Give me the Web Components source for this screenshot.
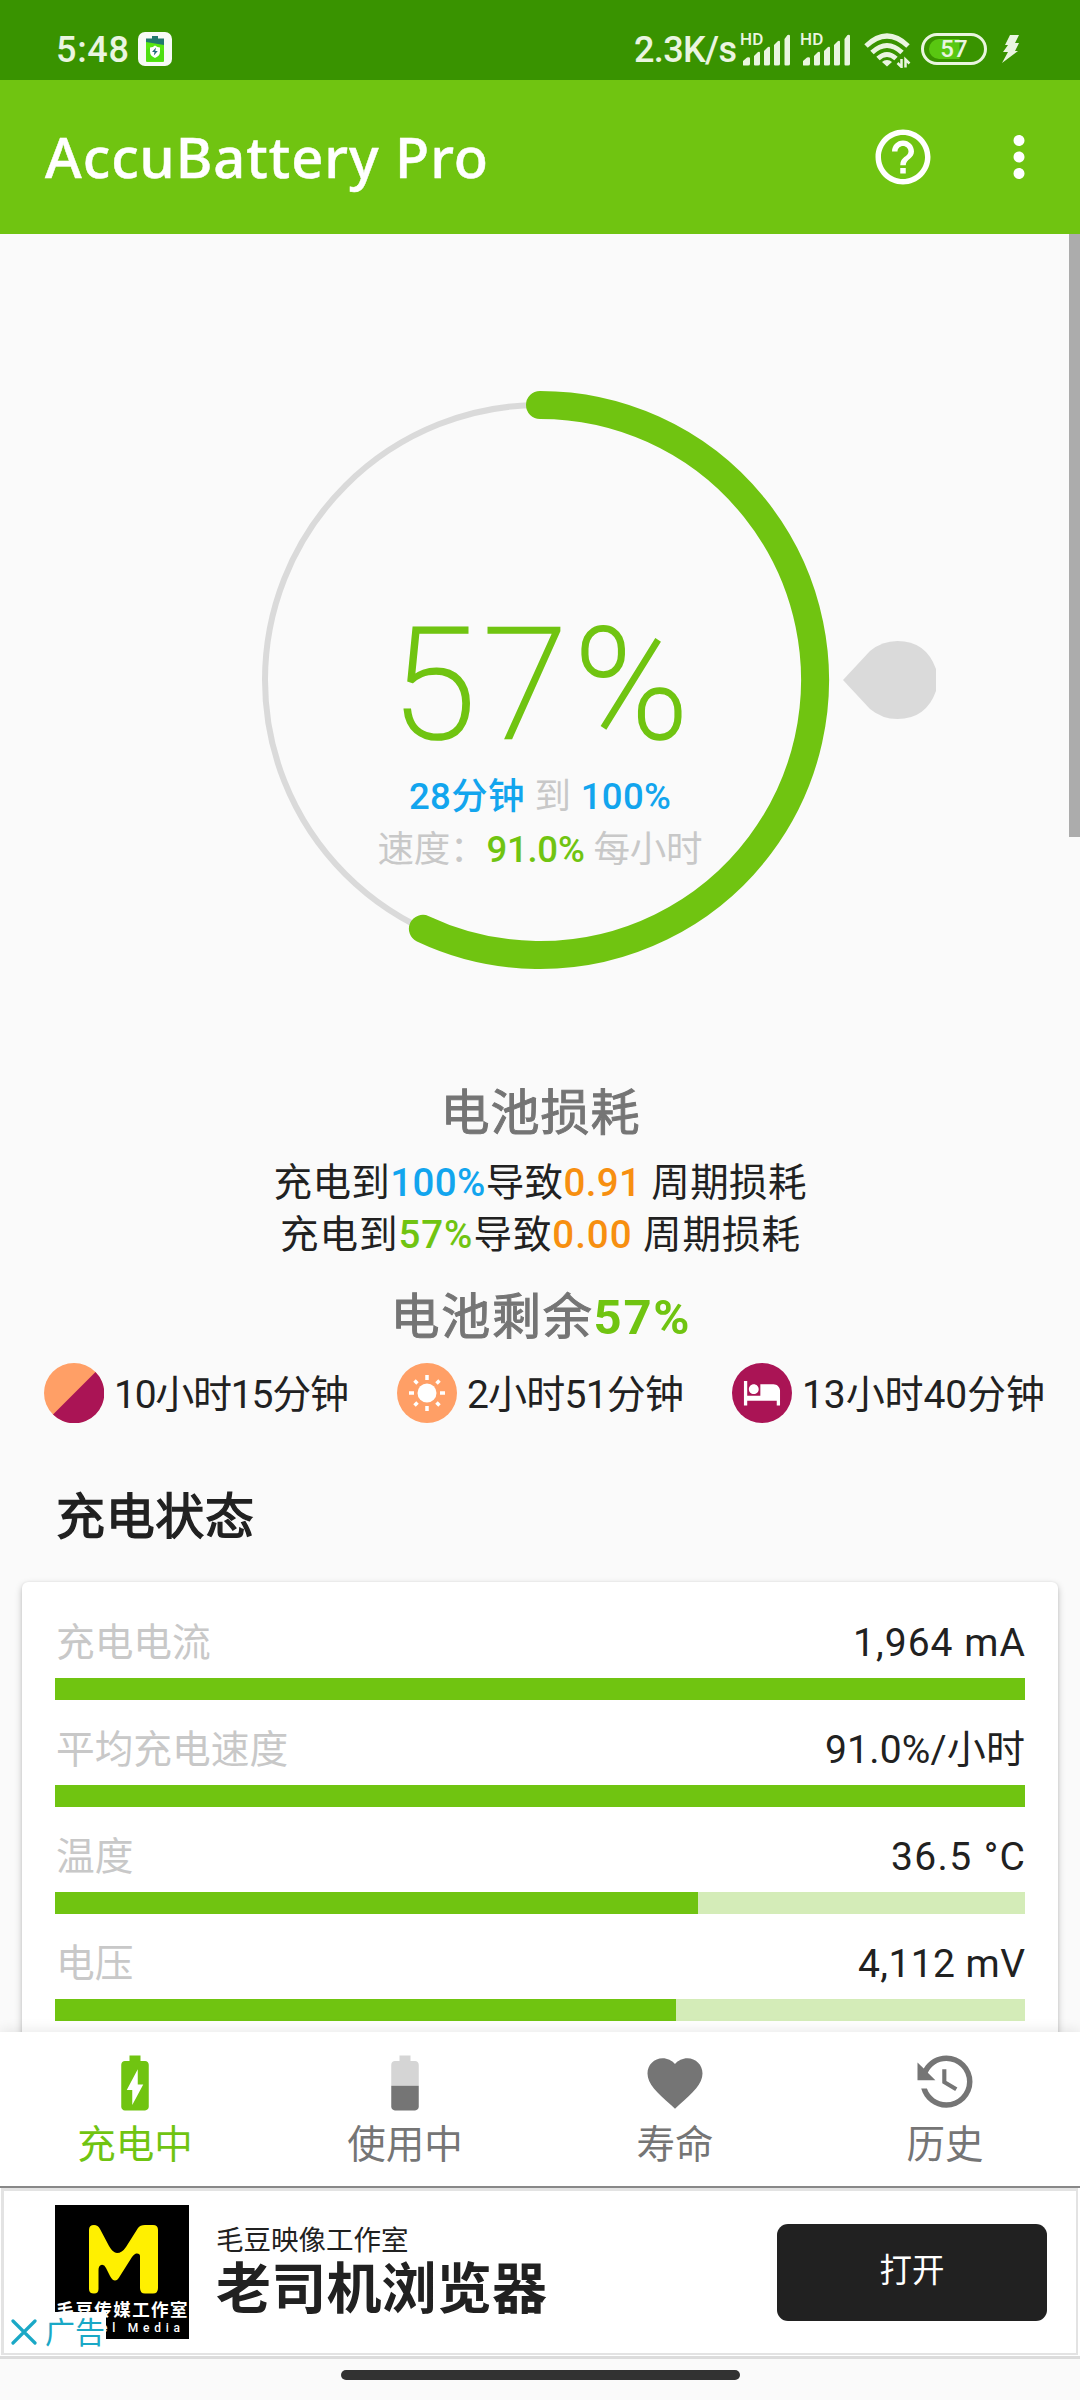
<!DOCTYPE html>
<html lang="zh-CN">
<head>
<meta charset="utf-8">
<title>AccuBattery Pro</title>
<style>
html,body{margin:0;padding:0}
body{width:1080px;height:2400px;overflow:hidden;background:#fafafa;color:#212121;font-family:Roboto,"Noto Sans CJK SC",sans-serif}
b{font-weight:500}
</style>
</head>
<body>
<battery-app></battery-app>
<script>
const define=(name,html,setup)=>customElements.define(name,class extends HTMLElement{
  constructor(){super();this.attachShadow({mode:'open'}).innerHTML=typeof html==='function'?'':html;}
  connectedCallback(){if(typeof html==='function')this.shadowRoot.innerHTML=html(this);if(setup)setup(this);}
});
const shared=`<style>b{font-weight:500}.blue{color:#12a5ee}.green{color:#70c411}.orange{color:#f78f10}.gray{color:#c8c8c8}</style>`;

/* One line of text, tracked so that it spans the given width. */
define('fit-line',el=>`<style>:host{display:block;width:max-content;white-space:pre;font-size:${el.getAttribute('size')}px;line-height:${el.getAttribute('line')}px}</style><slot></slot>`,el=>{
  const w=+el.getAttribute('w');if(!w)return;
  const n=[...el.textContent].length;
  const s=(w-el.getBoundingClientRect().width)/(n-1);
  el.style.letterSpacing=s+'px';el.style.marginRight=-s+'px';
});

define('signal-bars',`<style>:host{display:grid;width:49px;height:33px;margin-right:11px}
span,svg{grid-area:1/1}span{font:500 17px/14px Roboto,sans-serif;letter-spacing:.2px;margin:-1px 0 0 -1px}svg{display:block}</style>
<span>HD</span><svg width="49" height="33" fill="currentColor"><path d="M2 32v-4l4-3.500q3-1 3 1V31q0 1.500-2 1.500H3q-1 0-1-.5zM13 23l4-4q2-1 2 1v11q0 1.500-2 1.500h-3q-1 0-1-1zM23 18l4-4q2-1 2 1v16q0 1.500-2 1.500h-3q-1 0-1-1zM33 12l4-4q2-1 2 1v22q0 1.500-2 1.500h-3q-1 0-1-1zM43.500 6l3-4q2.500-1 2.500 1v28q0 1.500-2 1.500h-2.500q-1 0-1-1z"/></svg>`);

define('status-bar',shared+`<style>
:host{display:flex;height:80px;background:#399300;color:#eaf5e0;box-sizing:border-box;padding:0 61px 0 56px;align-items:flex-start;font-weight:500}
.time{margin-top:27px}.app{margin:32px 0 0 9px}.space{flex:1}.speed{margin-top:27px}
signal-bars{margin-top:33px}.first{margin-left:4px}.wifi{margin:32px 0 0 3px}
.pill{display:grid;place-items:center;width:60px;height:26px;border:3px solid;border-radius:17px;margin:33px 0 0 10px}
.pill svg,.pill span{grid-area:1/1}.pill span{font-size:24px;line-height:26px}
.bolt{margin:35px 0 0 15px}svg{display:block}
</style>
<fit-line class="time" size="36" line="46" w="73">5:48</fit-line>
<svg class="app" width="34" height="34"><rect width="34" height="34" rx="7" fill="#f7faf7"/><path d="M8 6.500h6V4h6v2.500h6V13H8z" fill="#21796d"/><path d="M8 10l9 1.500L26 13v16q0 1-1 1H9q-1 0-1-1z" fill="#57e610"/><path d="M8 18l7-4 11 5v10H8z" fill="#4dde12"/><path d="M17 13.500q2.500 2 5 2v4Q22 24 17 26q-5-2-5-6.500v-4q3 0 5-2z" fill="#fff"/><path d="M18 15.500l-4 4.500h2.500l-.7 3.500 4-4.500h-2.500z" fill="#206b78"/></svg>
<div class="space"></div>
<fit-line class="speed" size="36" line="46" w="103">2.3K/s</fit-line>
<signal-bars class="first"></signal-bars><signal-bars></signal-bars>
<svg class="wifi" width="47" height="36" fill="none" stroke="currentColor" stroke-width="5"><path d="M2 14q21-20 42 0M8 20.500q15-14 30 0M14 26.500q9-8 18 0"/><path d="M23 28q3 0 5 2l-5 4.500-5-4.500q2-2 5-2z" fill="currentColor" stroke="none"/><path d="M37.500 27v8l-4-4M41.500 35.500v-8l4 4" stroke-width="2.500"/></svg>
<div class="pill"><svg width="60" height="26"><path d="M35.500 3H15a10 10 0 0 0 0 20h20.500z" fill="#59c711"/></svg><span>57</span></div>
<svg class="bolt" width="17" height="28" fill="currentColor"><path d="M8 0h9l-4 8h4l-4 8h3L0 28l6-11H1l5-7H3z"/></svg>`);

define('app-bar',`<style>:host{display:flex;align-items:center;height:154px;box-sizing:border-box;background:#70c411;color:#fff;padding:0 28px 0 45px}
fit-line{font-family:"Noto Sans",sans-serif;font-weight:500;-webkit-text-stroke:.5px #fff;flex:none;padding-bottom:2px}.gap{flex:1}svg{display:block;fill:currentColor;flex:none}.more{margin-left:50px}</style>
<fit-line size="56" line="76" w="443">AccuBattery Pro</fit-line><div class="gap"></div>
<svg width="66" height="66" viewBox="0 0 24 24"><path d="M11 18h2v-2h-2v2zm1-16C6.480 2 2 6.480 2 12s4.480 10 10 10 10-4.480 10-10S17.520 2 12 2zm0 18c-4.410 0-8-3.590-8-8s3.590-8 8-8 8 3.590 8 8-3.590 8-8 8zm0-14c-2.210 0-4 1.790-4 4h2c0-1.100.9-2 2-2s2 .9 2 2c0 2-3 1.750-3 5h2c0-2.250 3-2.500 3-5 0-2.210-1.790-4-4-4z"/></svg>
<svg class="more" width="66" height="66" viewBox="0 0 24 24"><path d="M12 8c1.100 0 2-.9 2-2s-.9-2-2-2-2 .9-2 2 .9 2 2 2zm0 2c-1.100 0-2 .9-2 2s.9 2 2 2 2-.9 2-2-.9-2-2-2zm0 6c-1.100 0-2 .9-2 2s.9 2 2 2 2-.9 2-2-.9-2-2-2z"/></svg>`);

define('charge-ring',shared+`<style>:host{display:grid;height:849px;justify-items:center;align-items:start}
svg,.text{grid-area:1/1}.text{display:flex;flex-direction:column;align-items:center;padding-top:374px}
.big{font-weight:200;color:#70c411;-webkit-text-stroke:1.600px #70c411;margin-bottom:7px}</style>
<svg width="1080" height="800" fill="none"><circle cx="540" cy="446" r="275" stroke="#dadada" stroke-width="6"/>
<path d="M540 171A275 275 0 1 1 422.900 694.800" stroke="#70c411" stroke-width="28" stroke-linecap="round"/>
<path d="M843 446L870 417Q882 407 897.500 407Q926 407 936 435V457Q926 485 897.500 485Q882 485 870 475Z" fill="#dadada"/></svg>
<div class="text"><fit-line class="big" size="155" line="155" w="298">57%</fit-line>
<fit-line size="36.500" line="53" w="262"><b class="blue">28分钟</b><span class="gray"> 到 </span><b class="blue">100%</b></fit-line>
<fit-line size="36.500" line="54" w="325"><span class="gray">速度：</span><b class="green">91.0%</b><span class="gray"> 每小时</span></fit-line></div>`);

define('wear-summary',shared+`<style>:host{display:flex;flex-direction:column;align-items:center}
.h{color:#757575;-webkit-text-stroke:1px #757575}.h b{font-weight:700;-webkit-text-stroke:0}.a{margin-bottom:13px}.z{margin-top:26px}</style>
<fit-line class="h a" size="49" line="61" w="199">电池损耗</fit-line>
<fit-line size="38.500" line="52" w="533">充电到<b class="blue">100%</b>导致<b class="orange">0.91</b> 周期损耗</fit-line>
<fit-line size="38.500" line="52" w="520">充电到<b class="green">57%</b>导致<b class="orange">0.00</b> 周期损耗</fit-line>
<fit-line class="h z" size="49" line="61" w="299">电池剩余<b class="green">57%</b></fit-line>`);

define('time-chip',`<style>:host{display:flex;align-items:center;height:60px;gap:10px}::slotted(svg){display:block;flex:none}::slotted(fit-line){padding-top:3px}</style><slot></slot>`);

define('time-row',`<style>:host{display:flex;justify-content:space-between;padding:0 35px 0 44px;margin-top:15px}</style>
<time-chip><svg width="60" height="60"><circle cx="30" cy="30" r="30" fill="#ff9f66"/><path d="M51.500 9A30 30 0 1 1 9 51.500Z" fill="#aa1455"/></svg><fit-line size="39" line="52" w="235">10小时15分钟</fit-line></time-chip>
<time-chip><svg width="60" height="60"><circle cx="30" cy="30" r="30" fill="#ff9f66"/><circle cx="30" cy="30" r="9.500" fill="#fff"/><g stroke="#fff" stroke-width="3.500"><path d="M30 12v5M30 43v5M12 30h5M43 30h5M17.500 17.500l3 3M39.500 39.500l3 3M17.500 42.500l3-3M39.500 20.500l3-3"/></g></svg><fit-line size="39" line="52" w="217">2小时51分钟</fit-line></time-chip>
<time-chip><svg width="60" height="60"><circle cx="30" cy="30" r="30" fill="#aa1455"/><path transform="translate(10.300 9.800) scale(1.640)" fill="#fff" d="M7 13c1.660 0 3-1.340 3-3S8.660 7 7 7s-3 1.340-3 3 1.340 3 3 3zm12-6h-8v7H3V5H1v15h2v-3h18v3h2v-9c0-2.210-1.790-4-4-4z"/></svg><fit-line size="39" line="52" w="243">13小时40分钟</fit-line></time-chip>`);

define('meter-row',el=>`<style>:host{display:block;margin-bottom:24px}.t{display:flex;justify-content:space-between;padding-left:1px}.l{color:#c8c8c8}.track{height:22px;margin-top:9px;background:#d4ecb8}.fill{height:22px;background:#70c411;width:${el.getAttribute('fill')}px}</style>
<div class="t"><fit-line class="l" size="38.700" line="52">${el.getAttribute('label')}</fit-line><fit-line size="39" line="52" w="${el.getAttribute('vw')}">${el.getAttribute('value')}</fit-line></div><div class="track"><div class="fill"></div></div>`);

define('status-card',`<style>:host{display:block;margin:34px 22px 0;background:#fff;border-radius:6px;padding:35px 33px 40px;box-shadow:0 3px 7px rgba(0,0,0,.25),0 0 2px rgba(0,0,0,.08)}</style>
<meter-row label="充电电流" value="1,964 mA" vw="172" fill="970"></meter-row>
<meter-row label="平均充电速度" value="91.0%/小时" vw="200" fill="970"></meter-row>
<meter-row label="温度" value="36.5 °C" vw="134" fill="643"></meter-row>
<meter-row label="电压" value="4,112 mV" vw="167" fill="621"></meter-row>`);

define('scroll-content',`<style>:host{display:grid;grid-template-columns:1080px;height:1798px;overflow:hidden}.page,.bar{grid-area:1/1}.page{display:flex;flex-direction:column}
.bar{justify-self:end;width:11px;height:603px;background:#acacac}.title{margin:65px 0 0 56px;-webkit-text-stroke:1.400px #212121}</style>
<div class="page"><charge-ring></charge-ring><wear-summary></wear-summary><time-row></time-row>
<fit-line class="title" size="49" line="60" w="198">充电状态</fit-line><status-card></status-card></div><div class="bar"></div>`);

define('nav-tab',`<style>:host{flex:1;display:flex;flex-direction:column;align-items:center;padding-top:18px;color:#757575}:host([active]){color:#70c411}::slotted(svg){display:block;fill:currentColor}::slotted(fit-line){margin-top:3px}</style><slot></slot>`);

define('bottom-nav',`<style>:host{display:flex;height:154px;background:#fff;border-bottom:2px solid #888;box-shadow:0 -2px 12px rgba(0,0,0,.09);position:relative}</style>
<nav-tab active><svg width="66" height="66" viewBox="0 0 24 24"><path d="M15.670 4H14V2h-4v2H8.330C7.600 4 7 4.600 7 5.330v15.330C7 21.400 7.600 22 8.330 22h7.330c.74 0 1.340-.6 1.340-1.330V5.330C17 4.600 16.400 4 15.670 4zM11 20v-5.500H9L13 7v5.500h2L11 20z"/></svg><fit-line size="38.500" line="52">充电中</fit-line></nav-tab>
<nav-tab><svg width="66" height="66" viewBox="0 0 24 24"><path opacity=".3" d="M17 5.330C17 4.600 16.400 4 15.670 4H14V2h-4v2H8.330C7.600 4 7 4.600 7 5.330V13h10z"/><path d="M7 13v7.670C7 21.400 7.600 22 8.330 22h7.330c.74 0 1.340-.6 1.340-1.330V13z"/></svg><fit-line size="38.500" line="52">使用中</fit-line></nav-tab>
<nav-tab><svg width="66" height="66" viewBox="0 0 24 24"><path d="M12 21.350l-1.450-1.320C5.400 15.360 2 12.280 2 8.500 2 5.420 4.420 3 7.500 3c1.740 0 3.410.81 4.500 2.090C13.090 3.810 14.760 3 16.500 3 19.580 3 22 5.420 22 8.500c0 3.780-3.400 6.860-8.550 11.540z"/></svg><fit-line size="38.500" line="52">寿命</fit-line></nav-tab>
<nav-tab><svg width="66" height="66" viewBox="0 0 24 24"><path d="M11 7v5.110l4.710 2.790.79-1.280-4-2.370V7M12.500 2C8.970 2 5.910 3.920 4.270 6.770L2 4.500V11h6.500L5.750 8.250C6.960 5.730 9.500 4 12.500 4a7.500 7.500 0 0 1 0 15c-3.270 0-6.030-2.090-7.060-5h-2.100c1.100 4.030 4.770 7 9.160 7a9.500 9.500 0 0 0 0-19z"/></svg><fit-line size="38.500" line="52">历史</fit-line></nav-tab>`);

define('ad-banner',`<style>:host{display:block;height:168px;background:#fff;border-bottom:3px solid #dcdcdc;padding:0 2px 0 1px;position:relative}
.frame{height:162px;border:3px solid #e3e3e3;border-bottom-width:2px;border-right-width:2px;display:flex;align-items:flex-start}
.logo{width:134px;height:134px;margin:14px 0 0 51px;background:#000;color:#fff;display:flex;flex-direction:column;align-items:center}
.logo svg{display:block}.logo fit-line{font-weight:700}.logo .en{align-self:flex-start;margin-left:46px;font-weight:500}
.copy{margin:32px 0 0 27px}.name{font-weight:700}
.btn{margin:33px 29px 0 auto;width:270px;height:97px;border-radius:11px;background:#212121;color:#fff;display:flex;justify-content:center;align-items:center}.btn fit-line{margin-bottom:4px}
.mark{position:absolute;left:4px;top:124px;width:102px;height:40px;background:#fff;color:#1aa8c6;display:flex;align-items:center}.mark svg{margin:0 8px 0 7px}.mark fit-line{padding-top:1px}</style>
<div class="frame"><div class="logo"><svg width="134" height="95"><path fill="#fff000" d="M34 25Q34 20 39 20Q43 20 45 24L54 41Q58 48 62 48Q67 48 71 42L83 23Q85 20 90 20H98Q103 20 103 25V83Q103 88.500 98 88.500H90Q85 88.500 85 83V51Q85 48 81 48.500Q79 49 77 52L65 71Q60 80 55 71L51 63Q49 59 46 60Q43.500 61 43.500 65V84Q43.500 88.500 39 88.500Q34 88.500 34 84Z"/></svg>
<fit-line size="17.500" line="20" w="131">毛豆传媒工作室</fit-line><fit-line class="en" size="12" line="16" w="79">el Media</fit-line></div>
<div class="copy"><fit-line size="27.500" line="36">毛豆映像工作室</fit-line><fit-line class="name" size="55" line="60" w="331">老司机浏览器</fit-line></div>
<div class="btn"><fit-line size="32.500" line="44">打开</fit-line></div></div>
<div class="mark"><svg width="26" height="26" stroke="currentColor" stroke-width="3.200" stroke-linecap="round"><path d="M2 2l22 22M24 2L2 24"/></svg><fit-line size="30" line="40">广告</fit-line></div>`);

define('home-bar',`<style>:host{display:flex;justify-content:center;padding-top:11px}div{width:399px;height:10px;border-radius:5px;background:#323232}</style><div></div>`);

define('battery-app',`<style>:host{display:flex;flex-direction:column;width:1080px;height:2400px;background:#fafafa}status-bar,app-bar,scroll-content,bottom-nav,ad-banner{flex:none}</style>
<status-bar></status-bar><app-bar></app-bar><scroll-content></scroll-content><bottom-nav></bottom-nav><ad-banner></ad-banner><home-bar></home-bar>`);
</script>
</body>
</html>
